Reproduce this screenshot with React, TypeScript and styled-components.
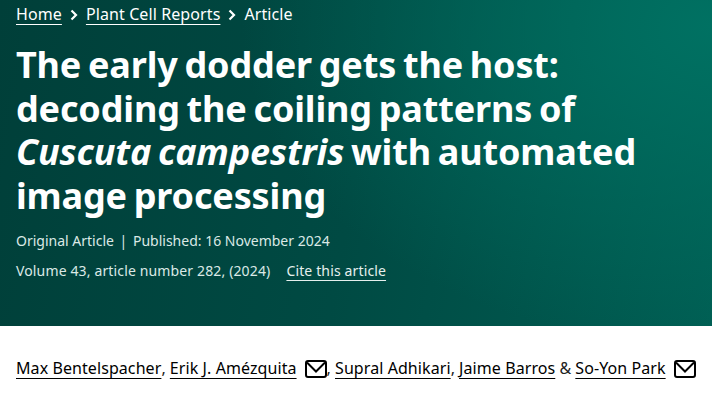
import { createGlobalStyle } from 'styled-components';
import styled from 'styled-components';

const GlobalStyle = createGlobalStyle`
  html, body {
    margin: 0;
    padding: 0;
    background: #fff;
    font-family: 'Noto Sans', 'Open Sans', sans-serif;
  }
`;

const Page = styled.div`
  width: 712px;
  height: 403px;
  overflow: hidden;
`;

const Hero = styled.header`
  height: 326px;
  box-sizing: border-box;
  padding: 2px 16px 0;
  color: #fff;
  background:
    radial-gradient(ellipse 470px 320px at 100% 8%, rgba(0, 114, 99, 0.95), rgba(0, 114, 99, 0) 100%),
    linear-gradient(100deg, #003f39 0%, #004a43 50%, #005e53 100%);
`;

const Crumbs = styled.nav`
  display: flex;
  align-items: center;
  height: 24px;
  font-size: 16px;
  line-height: 24px;
  letter-spacing: 0.1px;
`;

const CrumbLink = styled.a`
  color: #fff;
  text-decoration: underline;
  text-underline-offset: 4px;
  text-decoration-thickness: 1px;
`;

const CrumbArrow = styled.svg`
  width: 8px;
  height: 12px;
  margin: 2px 8px 0;
  fill: none;
  stroke: #fff;
  stroke-width: 2.2;
`;

const Title = styled.h1`
  margin: 17px 0 0;
  font-size: 36px;
  font-weight: 700;
  line-height: 43.6px;
  letter-spacing: -0.15px;
  word-spacing: -2.4px;
`;

const MetaRow = styled.p<{ $top: number; $spacing: number }>`
  margin: ${(p) => p.$top}px 0 0;
  font-size: 14px;
  line-height: 20px;
  color: #dbe9e6;
  letter-spacing: ${(p) => p.$spacing}px;
`;

const Divider = styled.span`
  margin: 0 2px;
`;

const CiteLink = styled.a`
  margin-left: 16px;
  color: #e6f0ee;
  text-decoration: underline;
  text-underline-offset: 4px;
  text-decoration-thickness: 1px;
`;

const Authors = styled.ul`
  display: flex;
  align-items: center;
  list-style: none;
  margin: 0;
  padding: 30px 16px 0;
  font-size: 16px;
  line-height: 24px;
  color: #222;
  white-space: nowrap;
`;

const AuthorItem = styled.li`
  display: flex;
  align-items: center;
`;

const AuthorLink = styled.a`
  color: #000;
  letter-spacing: 0.08px;
  text-decoration: underline;
  text-underline-offset: 4px;
  text-decoration-thickness: 1px;
`;

const MailIcon = styled.svg`
  width: 22px;
  height: 18px;
  margin: 2px 0 0 8px;
  fill: none;
  stroke: #000;
  stroke-width: 2;
`;

const Arrow = () => (
  <CrumbArrow viewBox="0 0 8 12">
    <path d="M1.5 1.5 6 6l-4.5 4.5" />
  </CrumbArrow>
);

const Mail = () => (
  <MailIcon viewBox="0 0 22 18">
    <rect x="1" y="1" width="20" height="16" rx="2" />
    <path d="M2 2.5 11 11.5l9-9" />
  </MailIcon>
);

export default function App() {
  return (
    <Page>
      <GlobalStyle />
      <Hero>
        <Crumbs>
          <CrumbLink>Home</CrumbLink>
          <Arrow />
          <CrumbLink>Plant Cell Reports</CrumbLink>
          <Arrow />
          <span>Article</span>
        </Crumbs>
        <Title>
          The early dodder gets the host:<br />
          decoding the coiling patterns of<br />
          <em>Cuscuta campestris</em> with automated<br />
          image processing
        </Title>
        <MetaRow $top={14} $spacing={0}>
          Original Article <Divider>|</Divider> Published: 16 November 2024
        </MetaRow>
        <MetaRow $top={10} $spacing={0.14}>
          Volume 43, article number 282, (2024)
          <CiteLink>Cite this article</CiteLink>
        </MetaRow>
      </Hero>
      <Authors>
        <AuthorItem><AuthorLink>Max Bentelspacher</AuthorLink>,&nbsp;</AuthorItem>
        <AuthorItem><AuthorLink>Erik J. Amézquita</AuthorLink><Mail />,&nbsp;</AuthorItem>
        <AuthorItem><AuthorLink>Supral Adhikari</AuthorLink>,&nbsp;</AuthorItem>
        <AuthorItem><AuthorLink>Jaime Barros</AuthorLink>&nbsp;&amp;&nbsp;</AuthorItem>
        <AuthorItem><AuthorLink>So-Yon Park</AuthorLink><Mail /></AuthorItem>
      </Authors>
    </Page>
  );
}
